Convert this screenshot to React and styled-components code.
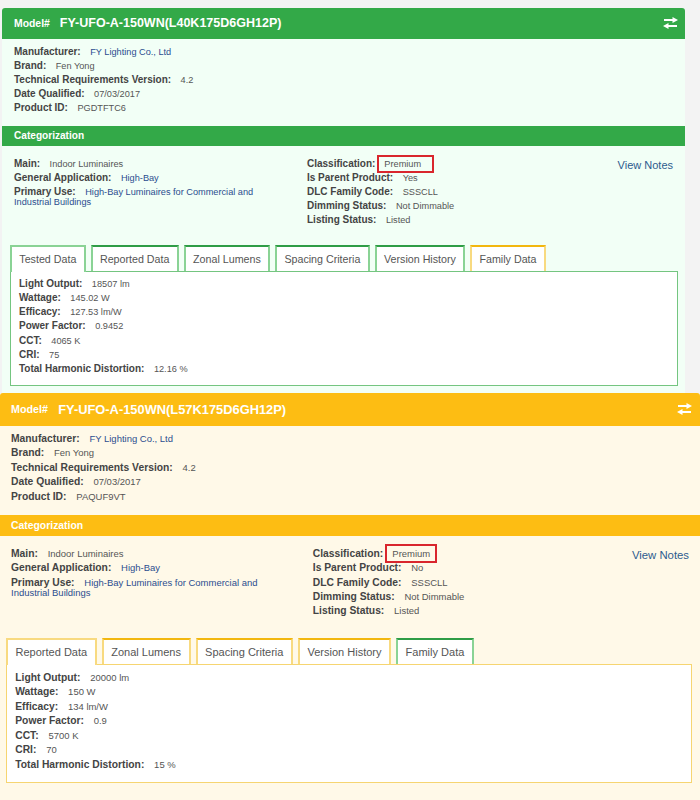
import React from "react";
import styled, { createGlobalStyle } from "styled-components";

const Global = createGlobalStyle`
  html, body { margin: 0; padding: 0; background: #f3f3f3; }
  body { font-family: "Liberation Sans", Arial, sans-serif; }
  * { box-sizing: border-box; }
`;

const green = {
  head: "#33a948",
  tint: "#f2fff6",
  box: "#74c580",
  tabLight: "#8ad395",
  tabDark: "#2f9d46",
};
const yellow = {
  head: "#fdbd13",
  tint: "#fff9e8",
  box: "#f6d571",
  tabLight: "#f8da80",
  tabDark: "#f2b70f",
};

const Page = styled.main`
  display: flex;
  flex-direction: column;
  padding-top: 7.5px;
`;

const Panel = styled.section`
  --s: ${(p) => p.$s};
  margin: ${(p) => p.$margin};
  background: ${(p) => p.$c.tint};
  border-radius: 3px 3px 0 0;
  padding-bottom: ${(p) => p.$bottom}px;
  font-size: calc(10px * var(--s));
`;

const Header = styled.header`
  display: flex;
  align-items: center;
  height: calc(31.5px * var(--s));
  padding: 0 ${(p) => p.$pr}px 0 ${(p) => p.$pl}px;
  background: ${(p) => p.$c.head};
  color: #fff;
  border-radius: 3px 3px 0 0;
`;

const ModelTag = styled.span`
  font-weight: bold;
  font-size: calc(10.4px * var(--s));
  margin-right: calc(10px * var(--s));
`;

const ModelName = styled.span`
  font-weight: bold;
  font-size: calc(12.5px * var(--s));
`;

const SwapIcon = styled.svg`
  margin-left: auto;
  width: 15px;
  height: 12px;
  display: block;
`;

const Info = styled.div`
  padding: calc(6px * var(--s)) ${(p) => p.$pad}px calc(10.5px * var(--s));
`;

const Line = styled.div`
  line-height: calc(14.1px * var(--s));
  white-space: nowrap;
`;

const Label = styled.span`
  font-weight: bold;
  font-size: calc(10px * var(--s));
  line-height: 1;
  color: #444;
`;

const Value = styled.span`
  font-size: calc(9.2px * var(--s));
  line-height: 1;
  color: ${(p) => (p.$link ? "#2b4d8f" : "#555")};
  margin-left: calc(9.5px * var(--s));
`;

const Premium = styled.span`
  font-size: calc(9.2px * var(--s));
  line-height: 1;
  color: #555;
  margin-left: 2px;
  padding: calc(2px * var(--s)) ${(p) => p.$padR}px calc(2px * var(--s)) calc(5px * var(--s));
  border: 2px solid #d9262d;
`;

const CatBar = styled.div`
  background: ${(p) => p.$c.head};
  color: #fff;
  font-weight: bold;
  font-size: calc(10.1px * var(--s));
  line-height: calc(20.5px * var(--s));
  padding-left: ${(p) => p.$pad}px;
`;

const CatBody = styled.div`
  display: grid;
  grid-template-columns: calc(293px * var(--s)) 1fr auto;
  align-items: start;
  padding: calc(12.25px * var(--s)) ${(p) => p.$pad}px 0;
`;

const Col = styled.div`
  padding-right: ${(p) => (p.$left ? "calc(28px * var(--s))" : "0")};
`;

const CatRow = styled.div`
  line-height: calc(10.5px * var(--s));
  margin-bottom: calc(3.5px * var(--s));
`;

const ViewNotes = styled.a`
  font-size: calc(11px * var(--s));
  color: #2d5b8e;
  text-decoration: none;
  line-height: calc(10.5px * var(--s));
  margin-top: calc(1.5px * var(--s));
  white-space: nowrap;
`;

const TabSection = styled.div`
  margin-top: calc(16.25px * var(--s));
  padding: 0 ${(p) => p.$r}px 0 ${(p) => p.$l}px;
`;

const TabBar = styled.div`
  display: flex;
  align-items: flex-end;
  gap: 5px;
`;

const Tab = styled.div`
  position: relative;
  z-index: ${(p) => (p.$active ? 1 : 0)};
  height: calc(26px * var(--s) + ${(p) => (p.$active ? 1 : 0)}px);
  margin-bottom: ${(p) => (p.$active ? -1 : 0)}px;
  padding: 0 calc(7.3px * var(--s));
  border: 2px solid ${(p) => p.$c.tabLight};
  border-top-color: ${(p) => (p.$active ? p.$c.tabLight : p.$c.tabDark)};
  border-bottom: 0;
  background: #fff;
  font-size: calc(10.7px * var(--s));
  line-height: calc(24px * var(--s));
  color: #555;
  white-space: nowrap;
`;

const DataBox = styled.div`
  position: relative;
  background: #fff;
  border: 1px solid ${(p) => p.$c.box};
  padding: calc(5.2px * var(--s)) calc(8px * var(--s)) calc(9px * var(--s));
`;

const Swap = () => (
  <SwapIcon viewBox="0 0 15 12" fill="#fff">
    <rect x="1" y="2" width="9.5" height="2" />
    <polygon points="9.5,0 15,3 9.5,6" />
    <rect x="4.5" y="8" width="9.5" height="2" />
    <polygon points="5.5,6 0,9 5.5,12" />
  </SwapIcon>
);

function ProductPanel({ d }) {
  const c = d.c;
  return (
    <Panel $s={d.s} $c={c} $margin={d.margin} $bottom={d.bottom}>
      <Header $c={c} $pl={d.pad} $pr={d.iconR}>
        <ModelTag>Model#</ModelTag>
        <ModelName>{d.model}</ModelName>
        <Swap />
      </Header>
      <Info $pad={d.pad}>
        <Line><Label>Manufacturer:</Label><Value $link>FY Lighting Co., Ltd</Value></Line>
        <Line><Label>Brand:</Label><Value>Fen Yong</Value></Line>
        <Line><Label>Technical Requirements Version:</Label><Value>4.2</Value></Line>
        <Line><Label>Date Qualified:</Label><Value>07/03/2017</Value></Line>
        <Line><Label>Product ID:</Label><Value>{d.pid}</Value></Line>
      </Info>
      <CatBar $c={c} $pad={d.pad}>Categorization</CatBar>
      <CatBody $pad={d.pad}>
        <Col $left>
          <CatRow><Label>Main:</Label><Value>Indoor Luminaires</Value></CatRow>
          <CatRow><Label>General Application:</Label><Value $link>High-Bay</Value></CatRow>
          <CatRow><Label>Primary Use:</Label><Value $link>High-Bay Luminaires for Commercial and Industrial Buildings</Value></CatRow>
        </Col>
        <Col>
          <CatRow><Label>Classification:</Label><Premium $padR={d.premR}>Premium</Premium></CatRow>
          <CatRow><Label>Is Parent Product:</Label><Value>{d.parent}</Value></CatRow>
          <CatRow><Label>DLC Family Code:</Label><Value>SSSCLL</Value></CatRow>
          <CatRow><Label>Dimming Status:</Label><Value>Not Dimmable</Value></CatRow>
          <CatRow><Label>Listing Status:</Label><Value>Listed</Value></CatRow>
        </Col>
        <ViewNotes>View Notes</ViewNotes>
      </CatBody>
      <TabSection $l={d.tabL} $r={d.tabR}>
        <TabBar>
          {d.tabs.map((t, i) => (
            <Tab key={t.name} $active={i === 0} $c={t.c}>{t.name}</Tab>
          ))}
        </TabBar>
        <DataBox $c={c}>
          {d.data.map(([k, v]) => (
            <Line key={k}><Label>{k}</Label><Value>{v}</Value></Line>
          ))}
        </DataBox>
      </TabSection>
    </Panel>
  );
}

const panels = [
  {
    c: green,
    s: 1,
    margin: "0 15px 0 2px",
    bottom: 7.3,
    pad: 12,
    iconR: 7,
    tabL: 8,
    tabR: 7.3,
    premR: 11,
    model: "FY-UFO-A-150WN(L40K175D6GH12P)",
    pid: "PGDTFTC6",
    parent: "Yes",
    tabs: [
      { name: "Tested Data", c: green },
      { name: "Reported Data", c: green },
      { name: "Zonal Lumens", c: green },
      { name: "Spacing Criteria", c: green },
      { name: "Version History", c: green },
      { name: "Family Data", c: yellow },
    ],
    data: [
      ["Light Output:", "18507 lm"],
      ["Wattage:", "145.02 W"],
      ["Efficacy:", "127.53 lm/W"],
      ["Power Factor:", "0.9452"],
      ["CCT:", "4065 K"],
      ["CRI:", "75"],
      ["Total Harmonic Distortion:", "12.16 %"],
    ],
  },
  {
    c: yellow,
    s: 1.03,
    margin: "0",
    bottom: 20,
    pad: 11,
    iconR: 8,
    tabL: 6,
    tabR: 8.3,
    premR: 5,
    model: "FY-UFO-A-150WN(L57K175D6GH12P)",
    pid: "PAQUF9VT",
    parent: "No",
    tabs: [
      { name: "Reported Data", c: yellow },
      { name: "Zonal Lumens", c: yellow },
      { name: "Spacing Criteria", c: yellow },
      { name: "Version History", c: yellow },
      { name: "Family Data", c: green },
    ],
    data: [
      ["Light Output:", "20000 lm"],
      ["Wattage:", "150 W"],
      ["Efficacy:", "134 lm/W"],
      ["Power Factor:", "0.9"],
      ["CCT:", "5700 K"],
      ["CRI:", "70"],
      ["Total Harmonic Distortion:", "15 %"],
    ],
  },
];

export default function App() {
  return (
    <>
      <Global />
      <Page>
        {panels.map((d) => (
          <ProductPanel key={d.model} d={d} />
        ))}
      </Page>
    </>
  );
}
